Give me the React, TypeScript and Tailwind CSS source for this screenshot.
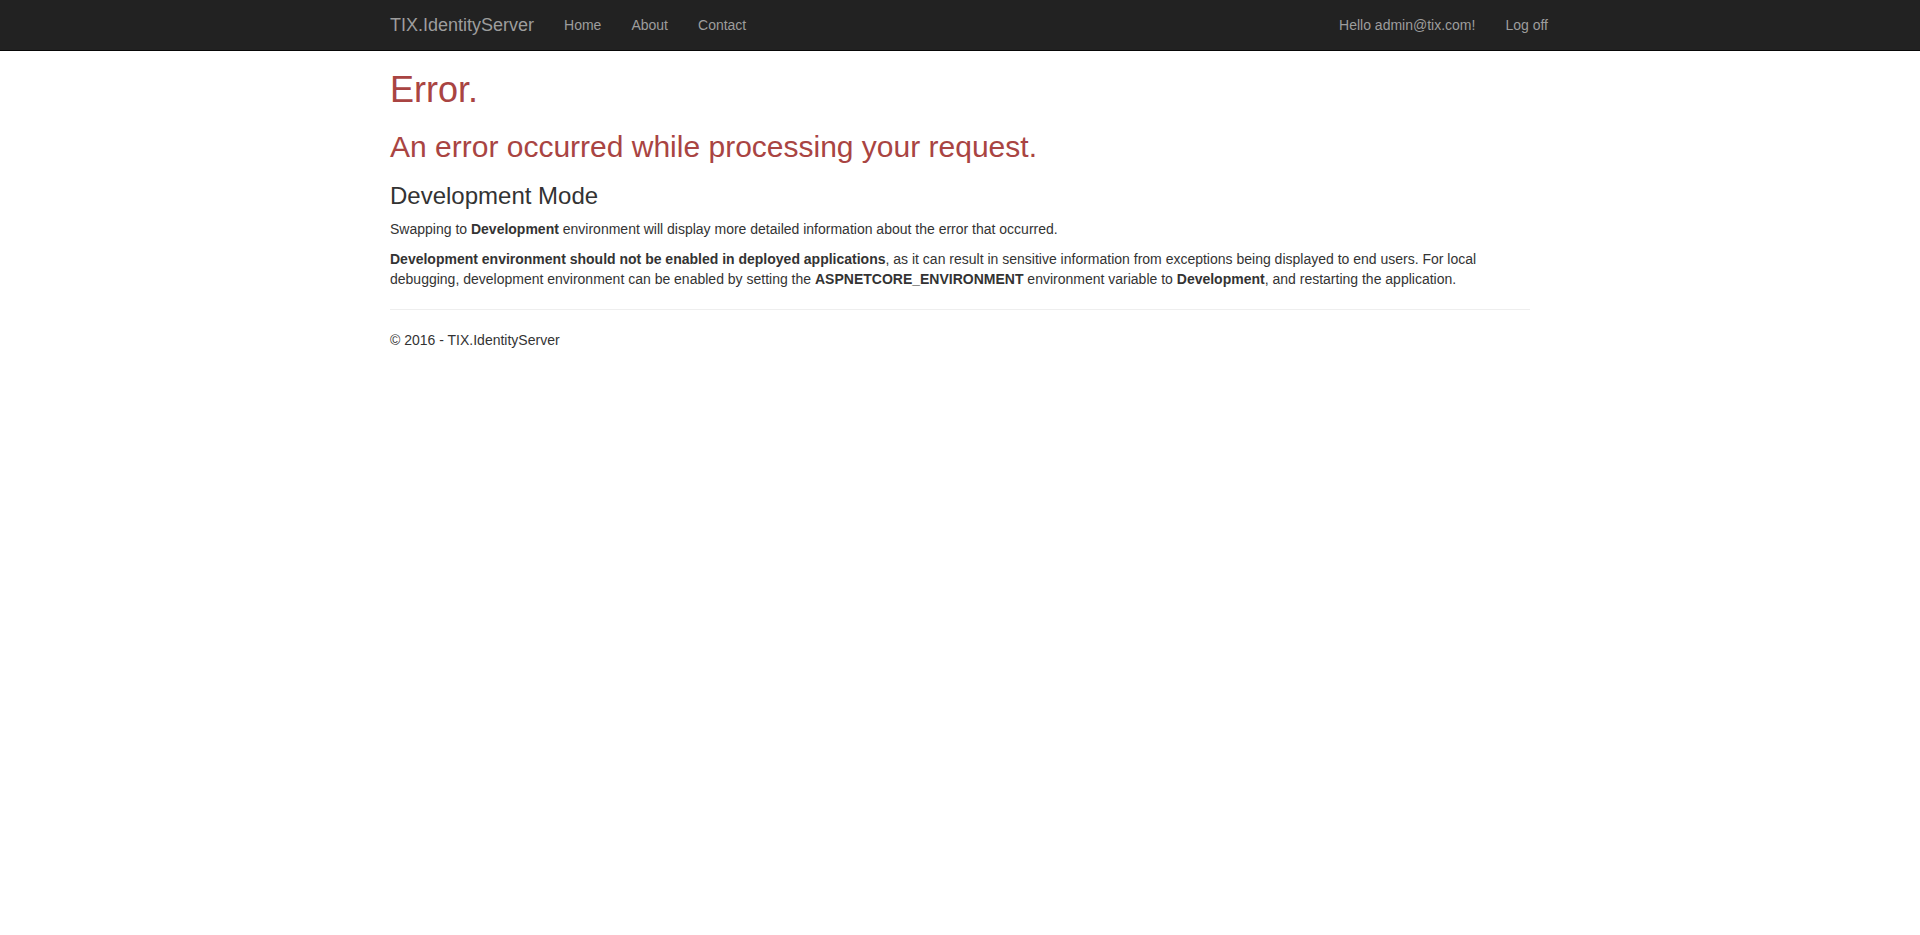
import React from 'react';

const navLinks = ['Home', 'About', 'Contact'];

const App: React.FC = () => {
    return (
        <div className="min-h-screen bg-white text-[14px] leading-[20px] text-[#333333] font-['Liberation_Sans',Arial,sans-serif]">
            {/* NAVBAR */}
            <nav className="h-[51px] bg-[#222222] border-b border-[#080808]">
                <div className="mx-auto w-[1170px] px-[15px] h-[50px] flex items-center">
                    <a href="#" className="-ml-[15px] px-[15px] py-[15px] text-[18px] leading-[20px] text-[#9d9d9d]">
                        TIX.IdentityServer
                    </a>
                    <ul className="flex">
                        {navLinks.map(link => (
                            <li key={link}>
                                <a href="#" className="block px-[15px] py-[15px] text-[#9d9d9d]">{link}</a>
                            </li>
                        ))}
                    </ul>
                    <ul className="flex ml-auto -mr-[33px]">
                        <li><a href="#" className="block px-[15px] py-[15px] text-[#9d9d9d]">Hello admin@tix.com!</a></li>
                        <li><a href="#" className="block px-[15px] py-[15px] text-[#9d9d9d]">Log off</a></li>
                    </ul>
                </div>
            </nav>

            {/* BODY CONTENT */}
            <div className="mx-auto w-[1170px] px-[15px] pb-[20px]">
                <h1 className="mt-[19px] mb-[10px] text-[36px] leading-[1.1] text-[#a94442]">Error.</h1>
                <h2 className="mt-[20px] mb-[10px] text-[30px] leading-[1.1] text-[#a94442]">An error occurred while processing your request.</h2>

                <h3 className="mt-[20px] mb-[10px] text-[24px] leading-[1.1]">Development Mode</h3>
                <p className="mb-[10px]">
                    Swapping to <strong className="font-bold">Development</strong> environment will display more detailed information about the error that occurred.
                </p>
                <p className="mb-[10px]">
                    <strong className="font-bold">Development environment should not be enabled in deployed applications</strong>, as it can result in sensitive information from exceptions being displayed to end users. For local debugging, development environment can be enabled by setting the <strong className="font-bold">ASPNETCORE_ENVIRONMENT</strong> environment variable to <strong className="font-bold">Development</strong>, and restarting the application.
                </p>

                <hr className="my-[20px] border-0 border-t border-[#eeeeee]" />
                <footer>
                    <p className="mb-[10px]">&copy; 2016 - TIX.IdentityServer</p>
                </footer>
            </div>
        </div>
    );
};

export default App;
